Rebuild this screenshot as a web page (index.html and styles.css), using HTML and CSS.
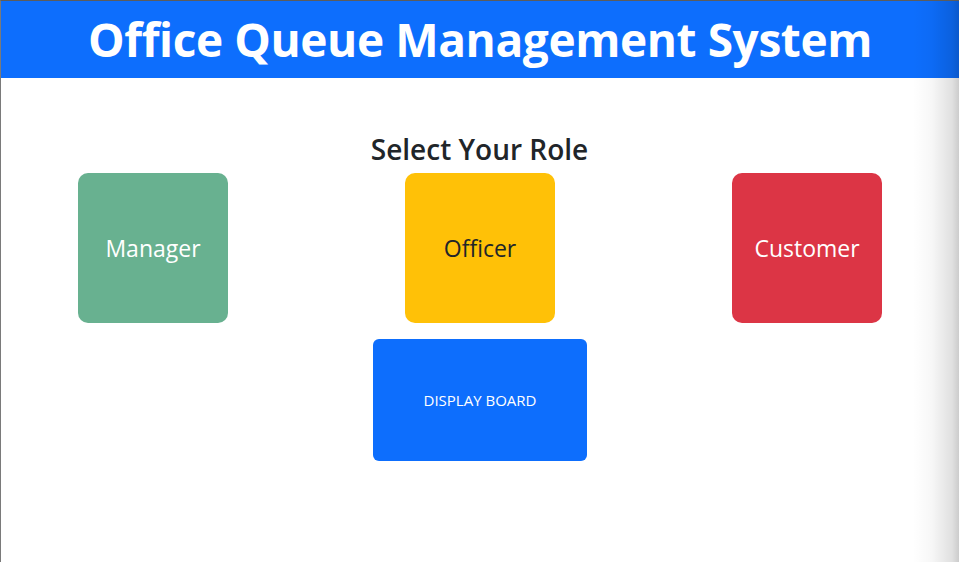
FILE: index.html
```html
<!DOCTYPE html>
<html>
<head>
<meta charset="utf-8">
<link rel="stylesheet" href="styles.css">
</head>
<body>
<div class="frame">
  <header class="topbar">
    <h1 class="title">Office Queue Management System</h1>
  </header>
  <main class="content">
    <h2 class="subtitle">Select Your Role</h2>
    <div class="roles">
      <button class="role role-manager">Manager</button>
      <button class="role role-officer">Officer</button>
      <button class="role role-customer">Customer</button>
    </div>
    <div class="board-row">
      <button class="board">DISPLAY BOARD</button>
    </div>
  </main>
  <div class="edge-shadow"></div>
</div>
</body>
</html>
```
FILE: styles.css
```css
html, body {
  margin: 0;
  padding: 0;
  height: 100%;
  background: #ffffff;
}
body {
  font-family: "Open Sans", "Noto Sans", sans-serif;
  color: #212529;
  overflow: hidden;
}
.frame {
  position: relative;
  height: 562px;
  box-sizing: border-box;
  border-top: 1px solid #5c5c5c;
  border-left: 1px solid #7a7a7a;
  overflow: hidden;
}
.topbar {
  background: #0d6efd;
  height: 77px;
  display: flex;
  align-items: center;
  justify-content: center;
}
.title {
  margin: 0;
  color: #ffffff;
  font-weight: 700;
  font-size: 46px;
  line-height: 1;
  letter-spacing: -0.4px;
  padding-bottom: 1px;
}
.content {
  display: flex;
  flex-direction: column;
  align-items: stretch;
}
.subtitle {
  margin: 51px 0 0;
  text-align: center;
  font-weight: 600;
  font-size: 28px;
  line-height: 40px;
  color: #212529;
  padding-right: 1px;
}
.roles {
  display: flex;
  justify-content: space-between;
  padding: 0 77px 0 77px;
  margin-top: 4px;
}
.role {
  width: 150px;
  height: 150px;
  border: none;
  border-radius: 10px;
  font-family: inherit;
  font-size: 23px;
  color: #ffffff;
  padding: 0;
}
.role-manager { background: #68b190; }
.role-officer { background: #ffc107; color: #212529; }
.role-customer { background: #dc3545; }
.board-row {
  display: flex;
  justify-content: center;
  margin-top: 16px;
}
.board {
  width: 214px;
  height: 122px;
  border: none;
  border-radius: 6px;
  background: #0d6efd;
  color: #ffffff;
  font-family: inherit;
  font-size: 15px;
  padding: 0;
}
.edge-shadow {
  position: absolute;
  top: 0;
  right: 0;
  width: 46px;
  height: 100%;
  background: linear-gradient(to right, rgba(0,0,0,0) 0%, rgba(0,0,0,0.03) 40%, rgba(0,0,0,0.12) 85%, rgba(0,0,0,0.2) 100%);
  pointer-events: none;
}
```
